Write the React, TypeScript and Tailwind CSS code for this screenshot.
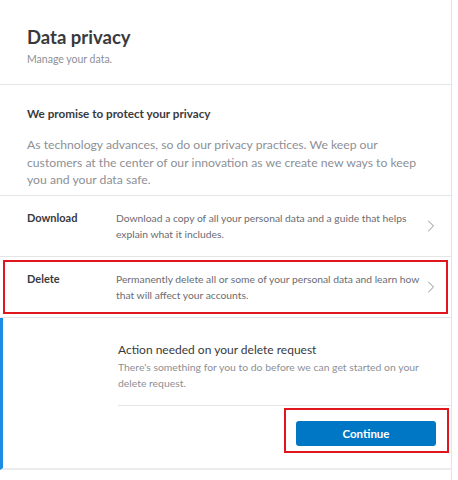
const font = { fontFamily: 'Lato, "Open Sans", sans-serif' }

function Chevron() {
  return (
    <svg width="8" height="12" viewBox="0 0 8 12" fill="none" className="shrink-0">
      <path d="M1.5 1 L6.5 6 L1.5 11" stroke="#8d9096" strokeWidth="1" strokeLinecap="round" strokeLinejoin="round" />
    </svg>
  )
}

function Row({
  label,
  text,
  marked,
}: {
  label: string
  text: string
  marked?: boolean
}) {
  return (
    <div className="relative flex h-[61px] border-b border-[#e4e5e8] pl-[27px] pr-[16px]">
      <div className="w-[89px] shrink-0 pt-[14px] text-[11px] font-bold leading-[16px] text-[#393a3d]">{label}</div>
      <div className="w-[311px] shrink-0 pt-[14px] text-[10.3px] leading-[16px] text-[#6b6c72]">{text}</div>
      <div className="flex flex-1 items-center justify-end">
        <Chevron />
      </div>
      {marked && (
        <div className="pointer-events-none absolute left-[3px] right-[3px] top-[3px] bottom-[3px] border-2 border-[#e0161f]" />
      )}
    </div>
  )
}

export default function App() {
  return (
    <div className="h-[480px] w-[458px] bg-white" style={font}>
      <div className="flex h-full w-[452px] flex-col border-r border-[#e4e5e8]">
        <div className="h-[85px] border-b border-[#e4e5e8] px-[27px] pt-[25px]">
          <h1 className="text-[18.5px] font-bold leading-[24px] text-[#393a3d]">Data privacy</h1>
          <p className="mt-[3px] text-[10.5px] leading-[14px] text-[#8d9096]">Manage your data.</p>
        </div>

        <div className="h-[111px] border-b border-[#e4e5e8] px-[27px] pt-[20px]">
          <h2 className="text-[11.7px] font-bold leading-[16px] text-[#393a3d]">We promise to protect your privacy</h2>
          <p className="mt-[15px] text-[12.2px] leading-[17.5px] text-[#8d9096]">
            As technology advances, so do our privacy practices. We keep our customers at the center of our
            innovation as we create new ways to keep you and your data safe.
          </p>
        </div>

        <Row
          label="Download"
          text="Download a copy of all your personal data and a guide that helps explain what it includes."
        />
        <Row
          label="Delete"
          text="Permanently delete all or some of your personal data and learn how that will affect your accounts."
          marked
        />

        <div className="h-[152px] border-b-2 border-l-[3px] border-b-[#ececee] border-l-[#1a8de3] pl-[115px] pt-[23px]">
          <h3 className="text-[12px] leading-[18px] text-[#393a3d]">Action needed on your delete request</h3>
          <p className="w-[310px] text-[10.4px] leading-[16px] text-[#8d9096]">
            There's something for you to do before we can get started on your delete request.
          </p>
          <div className="mt-[14px] flex justify-end border-t border-[#e4e5e8] pt-[14px] pr-[15px]">
            <div className="relative">
              <button className="h-[25px] w-[140px] rounded-[3px] bg-[#0077c5] text-[11.5px] font-bold text-white">
                Continue
              </button>
              <div className="pointer-events-none absolute -left-[12px] -right-[13px] -top-[12px] -bottom-[7px] border-2 border-[#e0161f]" />
            </div>
          </div>
        </div>
      </div>
    </div>
  )
}
